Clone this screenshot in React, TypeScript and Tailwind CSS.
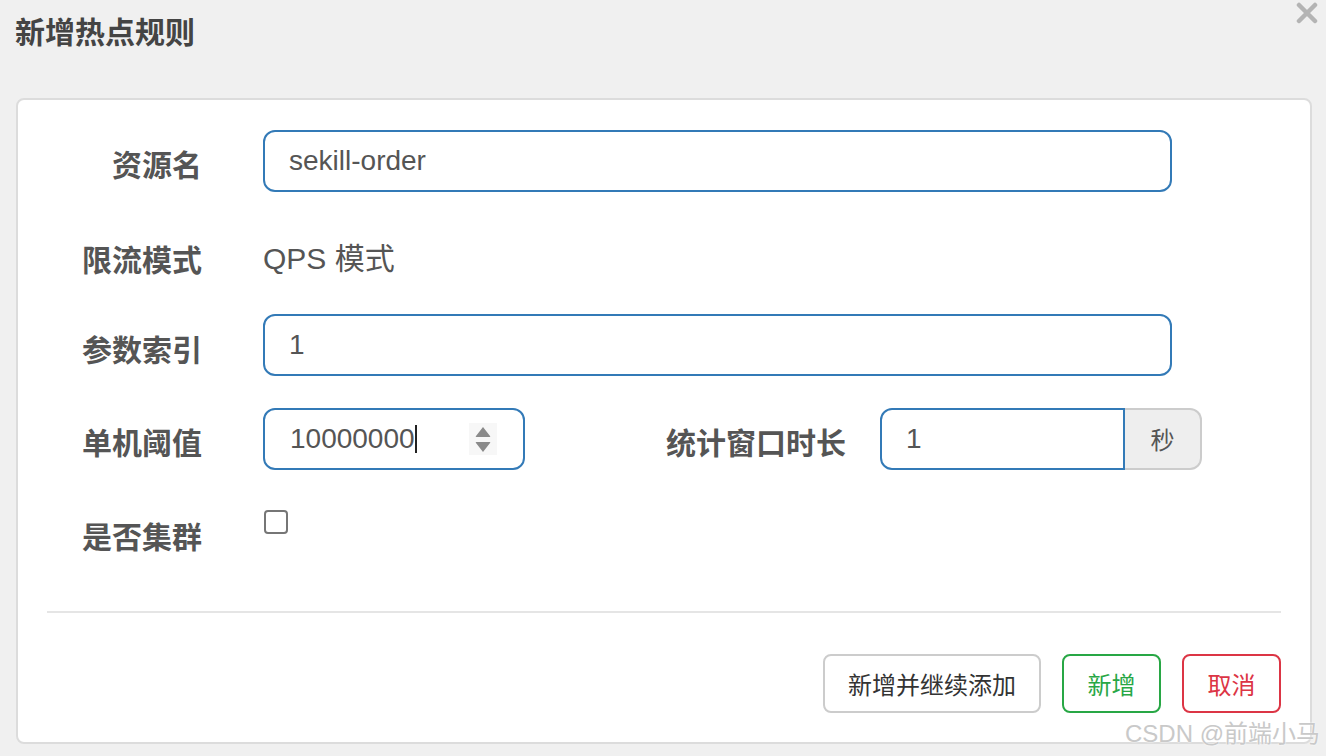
import React from 'react';

const cjk = '"Noto Sans CJK SC", "Noto Sans", sans-serif';
const latin = '"Liberation Sans", Arial, "Noto Sans CJK SC", sans-serif';

function Label({ children, className = '' }: { children: React.ReactNode; className?: string }) {
  return (
    <div
      className={`w-[155px] shrink-0 text-right text-[30px] leading-[30px] font-bold text-[#555] ${className}`}
      style={{ fontFamily: cjk }}
    >
      {children}
    </div>
  );
}

function TextBox({ value, width }: { value: string; width: string }) {
  return (
    <div
      className={`${width} h-[62px] flex items-center rounded-[12px] border-2 border-[#337ab7] bg-white pl-[24px] text-[28px] text-[#555]`}
      style={{ fontFamily: latin }}
    >
      {value}
    </div>
  );
}

function Spinner() {
  return (
    <div className="w-[28px] h-[32px] bg-[#f7f7f7] flex items-center justify-center">
      <svg width="20" height="30" viewBox="0 0 20 30">
        <path d="M10 3 L17 12 Q18 13 16.5 13 L3.5 13 Q2 13 3 12 Z" fill="#8a8a8a" />
        <path d="M10 28 L17 19 Q18 18 16.5 18 L3.5 18 Q2 18 3 19 Z" fill="#8a8a8a" />
      </svg>
    </div>
  );
}

export default function App() {
  return (
    <div className="relative w-[1326px] h-[756px] overflow-hidden bg-[#f0f0f0]">
      <div className="h-[98px] pl-[15px] pt-[15px]">
        <h1 className="text-[30px] leading-[30px] font-bold text-[#444]" style={{ fontFamily: cjk }}>
          新增热点规则
        </h1>
      </div>

      <button className="absolute top-[1px] right-[7px] w-[24px] h-[24px] flex items-center justify-center">
        <svg width="22" height="22" viewBox="0 0 22 22">
          <path d="M3 3 L19 19 M19 3 L3 19" stroke="#b4b4b4" strokeWidth="4.5" strokeLinecap="round" />
        </svg>
      </button>

      <div className="ml-[16px] w-[1296px] h-[646px] rounded-[8px] border-2 border-[#dcdcdc] bg-white pl-[29px] pr-[29px] pt-[30px]">
        <div className="flex items-start h-[62px]">
          <Label className="mt-[18px]">资源名</Label>
          <div className="ml-[61px]">
            <TextBox value="sekill-order" width="w-[909px]" />
          </div>
        </div>

        <div className="flex items-start h-[58px] mt-[32px]">
          <Label className="mt-[19px]">限流模式</Label>
          <div
            className="ml-[61px] mt-[19px] text-[30px] leading-[32px] text-[#555]"
            style={{ fontFamily: latin }}
          >
            QPS 模式
          </div>
        </div>

        <div className="flex items-start h-[62px] mt-[32px]">
          <Label className="mt-[19px]">参数索引</Label>
          <div className="ml-[61px]">
            <TextBox value="1" width="w-[909px]" />
          </div>
        </div>

        <div className="flex items-start h-[62px] mt-[32px]">
          <Label className="mt-[18px]">单机阈值</Label>
          <div
            className="ml-[61px] w-[262px] h-[62px] flex items-center rounded-[12px] border-2 border-[#337ab7] pl-[25px] pr-[26px] text-[28px] text-[#555]"
            style={{ fontFamily: latin }}
          >
            <span>10000000</span>
            <span className="w-[2px] h-[28px] bg-[#222]" />
            <div className="ml-auto">
              <Spinner />
            </div>
          </div>
          <div
            className="ml-[141px] mt-[18px] text-[30px] leading-[30px] font-bold text-[#555]"
            style={{ fontFamily: cjk }}
          >
            统计窗口时长
          </div>
          <div className="ml-[34px] flex h-[62px]">
            <div
              className="w-[245px] h-[62px] flex items-center rounded-l-[12px] border-2 border-[#337ab7] pl-[24px] text-[28px] text-[#555]"
              style={{ fontFamily: latin }}
            >
              1
            </div>
            <div
              className="w-[77px] h-[62px] flex items-center justify-center rounded-r-[12px] border-2 border-l-0 border-[#cccccc] bg-[#eeeeee] text-[24px] text-[#555]"
              style={{ fontFamily: cjk }}
            >
              秒
            </div>
          </div>
        </div>

        <div className="flex items-start h-[62px] mt-[32px]">
          <Label className="mt-[18px]">是否集群</Label>
          <div className="ml-[62px] mt-[8px] w-[24px] h-[24px] rounded-[4px] border-2 border-[#767676] bg-white" />
        </div>

        <div className="mt-[47px] h-[2px] bg-[#e5e5e5]" />

        <div className="mt-[41px] flex justify-end gap-[21px]" style={{ fontFamily: cjk }}>
          <button className="w-[218px] h-[59px] rounded-[8px] border-2 border-[#cccccc] bg-white text-[24px] text-[#333]">
            新增并继续添加
          </button>
          <button className="w-[99px] h-[59px] rounded-[8px] border-2 border-[#28a745] bg-white text-[24px] text-[#28a745]">
            新增
          </button>
          <button className="w-[99px] h-[59px] rounded-[8px] border-2 border-[#dc3545] bg-white text-[24px] text-[#dc3545]">
            取消
          </button>
        </div>
      </div>

      <div
        className="absolute left-[1125px] top-[719px] text-[24px] leading-[30px] text-[#c9c9c9]"
        style={{ fontFamily: latin, textShadow: '0 0 2px #ffffff, 0 0 1px #ffffff' }}
      >
        CSDN @前端小马
      </div>
    </div>
  );
}
